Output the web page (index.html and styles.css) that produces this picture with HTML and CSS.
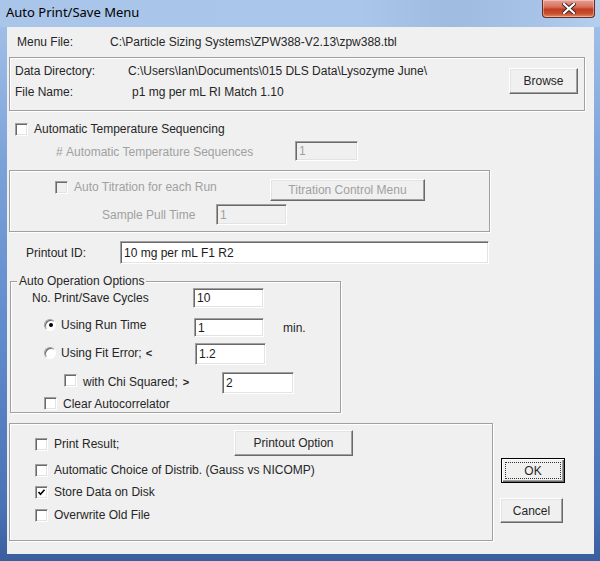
FILE: index.html
```html
<!DOCTYPE html>
<html>
<head>
<meta charset="utf-8">
<link rel="stylesheet" href="styles.css">
</head>
<body>
<div class="window">
  <div class="titlebar">
    <span class="title">Auto Print/Save Menu</span>
    <div class="close">
      <svg width="14" height="11" viewBox="0 0 14 11"><path d="M2 1 L12 10 M12 1 L2 10" stroke="#3a2020" stroke-width="4" stroke-linecap="square"/><path d="M2 1 L12 10 M12 1 L2 10" stroke="#fff" stroke-width="2.2" stroke-linecap="square"/></svg>
    </div>
  </div>
  <div class="client">
    <div class="menu-row">
      <span class="menu-label">Menu File:</span>
      <span>C:\Particle Sizing Systems\ZPW388-V2.13\zpw388.tbl</span>
    </div>

    <div class="group g-dir">
      <div class="dirinfo">
        <div class="dir-row"><span class="dir-label">Data Directory:</span><span>C:\Users\Ian\Documents\015 DLS Data\Lysozyme June\</span></div>
        <div class="dir-row"><span class="dir-label file">File Name:</span><span>p1 mg per mL RI Match 1.10</span></div>
      </div>
      <div class="btn browse">Browse</div>
    </div>

    <div class="row temp-row">
      <span class="chk"></span>
      <span class="temp-label">Automatic Temperature Sequencing</span>
    </div>
    <div class="row seq-row">
      <span class="seq-label disabled">#&nbsp;Automatic Temperature Sequences</span>
      <div class="edit disabled-edit seq-edit">1</div>
    </div>

    <div class="group g-tit">
      <div class="tit-row1">
        <span class="chk dis"></span>
        <span class="tit-label disabled">Auto Titration for each Run</span>
        <div class="btn tit-btn disabled">Titration Control Menu</div>
      </div>
      <div class="tit-row2">
        <span class="pull-label disabled">Sample Pull Time</span>
        <div class="edit disabled-edit pull-edit">1</div>
      </div>
    </div>

    <div class="row pid-row">
      <span class="pid-label">Printout ID:</span>
      <div class="edit pid-edit">10 mg per mL F1 R2</div>
    </div>

    <div class="group g-auto">
      <span class="legend">Auto Operation Options</span>
      <div class="cyc-row">
        <span class="cyc-label">No. Print/Save Cycles</span>
        <div class="edit cyc-edit">10</div>
      </div>
      <div class="run-row">
        <span class="radio on"></span>
        <span class="run-label">Using Run Time</span>
        <div class="edit run-edit">1</div>
        <span class="min">min.</span>
      </div>
      <div class="fit-row">
        <span class="radio"></span>
        <span class="fit-label">Using Fit Error;<span class="op lt">&lt;</span></span>
        <div class="edit fit-edit">1.2</div>
      </div>
      <div class="chi-row">
        <span class="chk"></span>
        <span class="chi-label">with Chi Squared;<span class="op gt">&gt;</span></span>
        <div class="edit chi-edit">2</div>
      </div>
      <div class="clr-row">
        <span class="chk"></span>
        <span class="clr-label">Clear Autocorrelator</span>
      </div>
    </div>

    <div class="bottom">
      <div class="group g-out">
        <div class="pr-row">
          <span class="chk"></span>
          <span class="pr-label">Print Result;</span>
          <div class="btn pr-btn">Printout Option</div>
        </div>
        <div class="opt-row r2">
          <span class="chk"></span>
          <span class="opt-label">Automatic Choice of Distrib. (Gauss vs NICOMP)</span>
        </div>
        <div class="opt-row r3">
          <span class="chk checked"><svg width="9" height="9" viewBox="0 0 9 9"><path d="M1.5 4 L3.5 6.2 L7.5 1.8" fill="none" stroke="#000" stroke-width="1.6"/></svg></span>
          <span class="opt-label">Store Data on Disk</span>
        </div>
        <div class="opt-row r4">
          <span class="chk"></span>
          <span class="opt-label">Overwrite Old File</span>
        </div>
      </div>
      <div class="actions">
        <div class="btn ok"><span class="focus">OK</span></div>
        <div class="btn cancel">Cancel</div>
      </div>
    </div>
  </div>
</div>
</body>
</html>
```

FILE: styles.css
```css
html, body {
  margin: 0;
  padding: 0;
}
body {
  width: 600px;
  height: 561px;
  overflow: hidden;
  font-family: "Liberation Sans", Arial, sans-serif;
  font-size: 12px;
  color: #262626;
}
.window {
  width: 600px;
  height: 561px;
  box-sizing: border-box;
  display: flex;
  flex-direction: column;
  background: linear-gradient(180deg, #a7c2e6 0%, #9ebde6 6%, #7aa1d8 30%, #5f8acb 60%, #4a73b6 90%, #3a5e9e 100%);
}
.titlebar {
  height: 27px;
  display: flex;
  align-items: flex-start;
  background: linear-gradient(90deg, #a9c5e9 0%, #aac6ea 60%, #9fbbe0 75%, #a7c4e8 90%, #b4cfee 100%);
}
.title {
  margin-left: 6px;
  margin-top: 3px;
  line-height: 18px;
  font-family: "Noto Sans", "Open Sans", sans-serif;
  font-size: 13px;
  color: #000;
}
.close {
  margin-left: auto;
  margin-right: 5px;
  width: 53px;
  height: 18px;
  box-sizing: border-box;
  border: 1px solid #6b2a22;
  border-top: none;
  border-radius: 0 0 4px 4px;
  background: linear-gradient(180deg, #e8a093 0%, #d9705e 40%, #c23d22 55%, #c8502f 80%, #e08a6a 100%);
  display: flex;
  align-items: center;
  justify-content: center;
  box-shadow: inset 0 0 0 1px rgba(255,255,255,0.35);
}
.client {
  margin: 0 6px 0 7px;
  height: 527px;
  background: #f0f0f0;
  display: flex;
  flex-direction: column;
}
.row {
  display: flex;
  align-items: center;
}
.group {
  box-sizing: border-box;
  border: 1px solid #a0a0a0;
  box-shadow: inset 1px 1px 0 #fff, 1px 1px 0 #fff;
}
.disabled {
  color: #a0a0a0;
}

/* controls */
.chk {
  width: 13px;
  height: 13px;
  box-sizing: border-box;
  flex: none;
  background: #fff;
  border: 1px solid;
  border-color: #a0a0a0 #fff #fff #a0a0a0;
  box-shadow: inset 1px 1px 0 #696969, inset -1px -1px 0 #e3e3e3;
  display: flex;
  align-items: center;
  justify-content: center;
}
.chk.dis {
  background: #f0f0f0;
}
.radio {
  width: 12px;
  height: 12px;
  box-sizing: border-box;
  flex: none;
  border-radius: 50%;
  background: #fff;
  border: 1px solid;
  border-color: #a0a0a0 #fff #fff #a0a0a0;
  box-shadow: inset 1px 1px 0 #696969;
  display: flex;
  align-items: center;
  justify-content: center;
}
.radio.on::after {
  content: "";
  width: 4px;
  height: 4px;
  border-radius: 50%;
  background: #000;
  margin: 0 0 0 1px;
}
.edit {
  box-sizing: border-box;
  flex: none;
  background: #fff;
  border: 1px solid;
  border-color: #a0a0a0 #fff #fff #a0a0a0;
  box-shadow: inset 1px 1px 0 #696969, inset -1px -1px 0 #e3e3e3;
  padding-left: 3px;
  display: flex;
  align-items: center;
  color: #1a1a1a;
}
.disabled-edit {
  background: #f0f0f0;
  color: #a0a0a0;
}
.btn {
  box-sizing: border-box;
  flex: none;
  background: #f0f0f0;
  border: 1px solid;
  border-color: #fff #696969 #696969 #fff;
  box-shadow: inset -1px -1px 0 #a0a0a0, inset 1px 1px 0 #e3e3e3;
  display: flex;
  align-items: center;
  justify-content: center;
  color: #262626;
}
.btn.disabled {
  color: #a0a0a0;
}

/* menu file */
.menu-row {
  height: 30px;
  display: flex;
  align-items: center;
  padding-left: 10px;
}
.menu-label {
  width: 93px;
}

/* data dir group */
.g-dir {
  margin-left: 2px;
  width: 576px;
  height: 54px;
  display: flex;
  align-items: flex-start;
}
.dirinfo {
  padding-top: 6px;
  padding-left: 5px;
  display: flex;
  flex-direction: column;
  gap: 7px;
}
.dir-row {
  display: flex;
  line-height: 14px;
}
.dir-label {
  width: 113px;
}
.dir-label.file {
  width: 117px;
}
.browse {
  width: 69px;
  height: 26px;
  margin: 10px 6px 0 auto;
}

/* temp */
.temp-row {
  margin-top: 10px;
  height: 16px;
  padding-left: 8px;
}
.temp-label {
  margin-left: 6px;
}
.seq-row {
  margin-top: 4px;
  height: 20px;
}
.seq-label {
  margin-left: 49px;
  width: 239px;
  margin-top: 2px;
}
.seq-edit {
  width: 63px;
  height: 20px;
}

/* titration group */
.g-tit {
  margin-top: 9px;
  margin-left: 2px;
  width: 481px;
  height: 62px;
  display: flex;
  flex-direction: column;
}
.tit-row1 {
  margin-top: 8px;
  height: 22px;
  display: flex;
  align-items: flex-start;
}
.tit-row1 .chk {
  margin-left: 45px;
  margin-top: 2px;
}
.tit-label {
  margin-left: 6px;
  margin-top: 1px;
  line-height: 14px;
  width: 196px;
}
.tit-btn {
  width: 155px;
  height: 22px;
}
.tit-row2 {
  margin-top: 3px;
  height: 21px;
  display: flex;
  align-items: center;
}
.pull-label {
  margin-left: 92px;
  width: 114px;
  margin-top: 1px;
}
.pull-edit {
  width: 71px;
  height: 21px;
}

/* printout id */
.pid-row {
  margin-top: 9px;
  height: 23px;
}
.pid-label {
  margin-left: 19px;
  width: 94px;
}
.pid-edit {
  width: 369px;
  height: 23px;
}

/* auto operation group */
.g-auto {
  position: relative;
  margin-top: 17px;
  margin-left: 3px;
  width: 331px;
  height: 132px;
  display: flex;
  flex-direction: column;
}
.legend {
  position: absolute;
  top: -8px;
  left: 6px;
  padding: 0 2px;
  line-height: 14px;
  background: #f0f0f0;
}
.cyc-row {
  margin-top: 6px;
  height: 20px;
  display: flex;
  align-items: center;
}
.cyc-label {
  margin-left: 21px;
  width: 161px;
}
.cyc-edit {
  width: 71px;
  height: 20px;
}
.run-row, .fit-row, .chi-row, .clr-row {
  display: flex;
  align-items: flex-start;
  line-height: 14px;
}
.run-row {
  margin-top: 10px;
  height: 20px;
}
.run-row .radio {
  margin-left: 33px;
  margin-top: 1px;
}
.run-label {
  margin-left: 5px;
  width: 133px;
}
.run-edit {
  width: 70px;
  height: 19px;
}
.min {
  margin-left: 19px;
  margin-top: 3px;
}
.fit-row {
  margin-top: 5px;
  height: 22px;
}
.fit-row .radio {
  margin-left: 33px;
  margin-top: 4px;
}
.fit-label {
  margin-left: 5px;
  width: 134px;
  margin-top: 3px;
}
.op {
  font-weight: bold;
  font-size: 11px;
}
.lt {
  margin-left: 4px;
}
.gt {
  margin-left: 5px;
}
.fit-edit {
  width: 71px;
  height: 22px;
}
.chi-row {
  margin-top: 7px;
  height: 22px;
}
.chi-row .chk {
  margin-left: 53px;
  margin-top: 2px;
}
.chi-label {
  margin-left: 6px;
  width: 139px;
  margin-top: 3px;
}
.chi-edit {
  width: 72px;
  height: 22px;
}
.clr-row {
  margin-top: 3px;
  height: 14px;
}
.clr-row .chk {
  margin-left: 33px;
}
.clr-label {
  margin-left: 6px;
}

/* bottom */
.bottom {
  margin-top: 10px;
  display: flex;
  align-items: flex-start;
}
.g-out {
  margin-left: 2px;
  width: 484px;
  height: 118px;
  display: flex;
  flex-direction: column;
}
.pr-row {
  margin-top: 6px;
  height: 26px;
  display: flex;
  align-items: center;
}
.pr-row .chk {
  margin-left: 25px;
  margin-top: 2px;
}
.pr-label {
  margin-left: 6px;
  width: 180px;
  margin-top: 2px;
}
.pr-btn {
  width: 119px;
  height: 26px;
}
.opt-row {
  height: 14px;
  display: flex;
  align-items: center;
}
.opt-row .chk {
  margin-left: 25px;
}
.opt-label {
  margin-left: 6px;
}
.r2 { margin-top: 7px; }
.r3 { margin-top: 8px; }
.r4 { margin-top: 9px; }

.actions {
  margin-left: 7px;
  display: flex;
  flex-direction: column;
  align-items: flex-start;
}
.ok {
  margin-top: 35px;
  margin-left: 1px;
  width: 64px;
  height: 25px;
  border: 1px solid #000;
  box-shadow: inset 1px 1px 0 #fff, inset -1px -1px 0 #696969, inset -2px -2px 0 #a0a0a0;
  padding: 3px;
}
.focus {
  flex: 1;
  align-self: stretch;
  outline: 1px dotted #333;
  outline-offset: -1px;
  display: flex;
  align-items: center;
  justify-content: center;
}
.cancel {
  margin-top: 15px;
  width: 63px;
  height: 25px;
}
```
